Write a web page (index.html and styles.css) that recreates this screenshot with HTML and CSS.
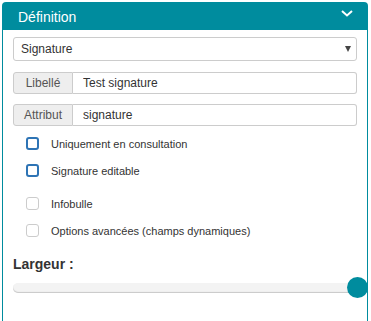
FILE: index.html
```html
<!DOCTYPE html>
<html lang="fr">
<head>
    <meta charset="UTF-8">
    <meta name="viewport" content="width=device-width, initial-scale=1.0">
    <title>Définition</title>
    <link rel="stylesheet" href="styles.css">
</head>
<body>
    <div class="panel">
        <div class="panel-heading">
            <span class="panel-title">Définition</span>
            <svg class="chevron" width="12" height="7" viewBox="0 0 12 7">
                <polyline points="1,1 6,5.5 11,1" fill="none" stroke="#fff" stroke-width="2"/>
            </svg>
        </div>
        <div class="panel-body">
            <div class="select-wrap">
                <select class="form-select">
                    <option>Signature</option>
                </select>
            </div>

            <div class="input-group">
                <span class="addon">Libellé</span>
                <input class="form-input" type="text" value="Test signature">
            </div>
            <div class="input-group">
                <span class="addon">Attribut</span>
                <input class="form-input" type="text" value="signature">
            </div>

            <div class="check-group">
                <label class="check-row">
                    <span class="check-box blue"></span>
                    <span>Uniquement en consultation</span>
                </label>
                <label class="check-row">
                    <span class="check-box blue"></span>
                    <span>Signature editable</span>
                </label>
            </div>
            <div class="check-group second">
                <label class="check-row">
                    <span class="check-box"></span>
                    <span>Infobulle</span>
                </label>
                <label class="check-row">
                    <span class="check-box"></span>
                    <span>Options avancées (champs dynamiques)</span>
                </label>
            </div>

            <div class="field-title">Largeur :</div>
            <div class="slider">
                <div class="slider-track"></div>
                <div class="slider-thumb"></div>
            </div>
        </div>
    </div>
</body>
</html>
```

FILE: styles.css
```css
/* reset */
* {
    margin: 0;
    padding: 0;
    box-sizing: border-box;
}

body {
    font-family: 'Liberation Sans', Arial, sans-serif;
    color: #333;
    background: #fff;
}

/* panel */
.panel {
    margin: 2px 0 0 2px;
    width: 366px;
    min-height: 330px;
    border: 1px solid #008c9e;
    border-bottom: none;
    border-radius: 4px 4px 0 0;
}

.panel-heading {
    height: 27px;
    background-color: #008c9e;
    color: #fff;
    display: flex;
    align-items: center;
    justify-content: space-between;
    padding: 0 14px 0 15px;
}

.panel-title {
    font-size: 14px;
}

.chevron {
    margin-top: -6px;
}

.panel-body {
    padding: 7px 10px;
}

/* select */
.select-wrap {
    position: relative;
    margin-bottom: 11px;
}

.select-wrap::after {
    content: "";
    position: absolute;
    right: 6px;
    top: 9px;
    border-left: 3px solid transparent;
    border-right: 3px solid transparent;
    border-top: 6px solid #444;
}

.form-select {
    appearance: none;
    -webkit-appearance: none;
    display: block;
    width: 100%;
    height: 24px;
    padding: 0 7px;
    border: 1px solid #ccc;
    border-radius: 3px;
    background: #fff;
    font-family: inherit;
    font-size: 12px;
    color: #333;
}

/* input groups */
.input-group {
    display: flex;
    height: 22px;
    margin-bottom: 10px;
}

.addon {
    width: 60px;
    display: flex;
    align-items: center;
    justify-content: center;
    background-color: #eee;
    border: 1px solid #ccc;
    border-radius: 3px 0 0 3px;
    font-size: 12px;
    color: #555;
}

.form-input {
    flex: 1;
    min-width: 0;
    border: 1px solid #ccc;
    border-left: none;
    border-radius: 0 3px 3px 0;
    padding: 0 10px;
    font-family: inherit;
    font-size: 12px;
    color: #333;
}

/* checkboxes */
.check-group {
    margin-top: -6px;
}

.check-group.second {
    margin-top: 6px;
}

.check-row {
    display: flex;
    align-items: center;
    height: 27px;
    padding-left: 13px;
    font-size: 11px;
    color: #333;
}

.check-box {
    width: 13px;
    height: 13px;
    margin-right: 12px;
    border: 1px solid #ccc;
    border-radius: 3px;
    background: #fff;
}

.check-box.blue {
    border: 2px solid #2e74b5;
}

/* slider */
.field-title {
    margin-top: 12px;
    font-size: 14px;
    font-weight: bold;
    line-height: 16px;
    color: #333;
}

.slider {
    position: relative;
    height: 21px;
    margin-top: 5px;
    display: flex;
    align-items: center;
}

.slider-track {
    width: 100%;
    height: 10px;
    border-radius: 5px;
    background-color: #f3f3f3;
    box-shadow: inset 0 -1px 1px #c8c8c8;
}

.slider-thumb {
    position: absolute;
    right: -11px;
    top: 0;
    width: 21px;
    height: 21px;
    border-radius: 50%;
    background-color: #008c9e;
}
```
